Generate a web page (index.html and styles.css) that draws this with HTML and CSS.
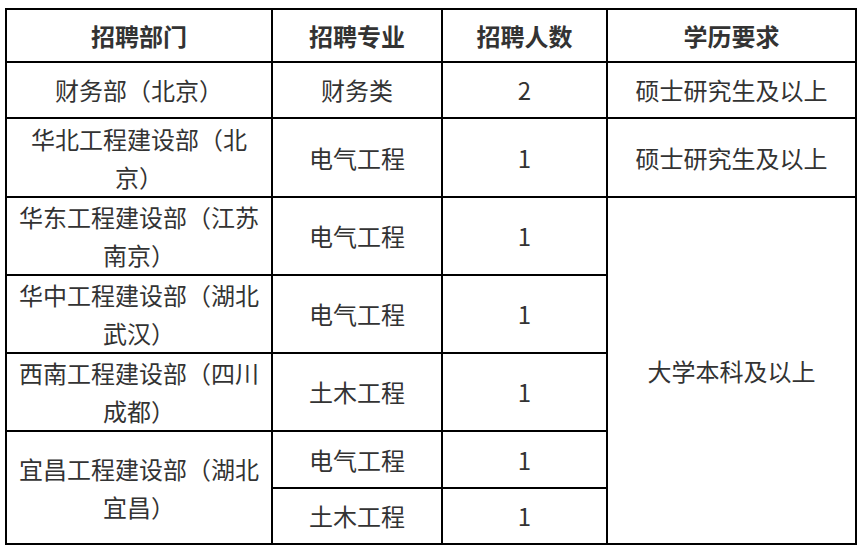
FILE: index.html
```html
<!DOCTYPE html>
<html lang="zh">
<head>
<meta charset="utf-8">
<link rel="stylesheet" href="styles.css">
</head>
<body>
<div class="wrap">
<table class="jobs">
  <colgroup>
    <col class="c1"><col class="c2"><col class="c3"><col class="c4">
  </colgroup>
  <thead>
    <tr class="h-head">
      <th>招聘部门</th><th>招聘专业</th><th>招聘人数</th><th>学历要求</th>
    </tr>
  </thead>
  <tbody>
    <tr class="h-56">
      <td>财务部（北京）</td><td>财务类</td><td>2</td><td>硕士研究生及以上</td>
    </tr>
    <tr class="h-79">
      <td>华北工程建设部（北京）</td><td>电气工程</td><td>1</td><td>硕士研究生及以上</td>
    </tr>
    <tr class="h-78">
      <td>华东工程建设部（江苏南京）</td><td>电气工程</td><td>1</td><td rowspan="6">大学本科及以上</td>
    </tr>
    <tr class="h-78">
      <td>华中工程建设部（湖北武汉）</td><td>电气工程</td><td>1</td>
    </tr>
    <tr class="h-78">
      <td>西南工程建设部（四川成都）</td><td>土木工程</td><td>1</td>
    </tr>
    <tr class="h-57">
      <td rowspan="2">宜昌工程建设部（湖北宜昌）</td><td>电气工程</td><td>1</td>
    </tr>
    <tr class="h-56">
      <td>土木工程</td><td>1</td>
    </tr>
  </tbody>
</table>
</div>
</body>
</html>
```

FILE: styles.css
```css
html, body {
  margin: 0;
  padding: 0;
  background: #fff;
}
.wrap {
  padding: 8px 0 0 5px;
}
.jobs {
  border-collapse: collapse;
  table-layout: fixed;
  width: 852px;
  font-family: "Microsoft YaHei", "Noto Sans CJK SC", "Noto Sans", sans-serif;
  font-size: 24px;
  color: #333;
  text-spacing-trim: space-all;
}
.c1 { width: 266px; }
.c2 { width: 170px; }
.c3 { width: 165px; }
.c4 { width: 249px; }
.jobs th, .jobs td {
  border: 2px solid #000;
  text-align: center;
  vertical-align: middle;
  padding: 0 6px;
  line-height: 38px;
}
.jobs th {
  font-weight: bold;
  color: #333;
}
.h-head { height: 53px; }
.h-56 { height: 56px; }
.h-57 { height: 57px; }
.h-78 { height: 78px; }
.h-79 { height: 79px; }
```
